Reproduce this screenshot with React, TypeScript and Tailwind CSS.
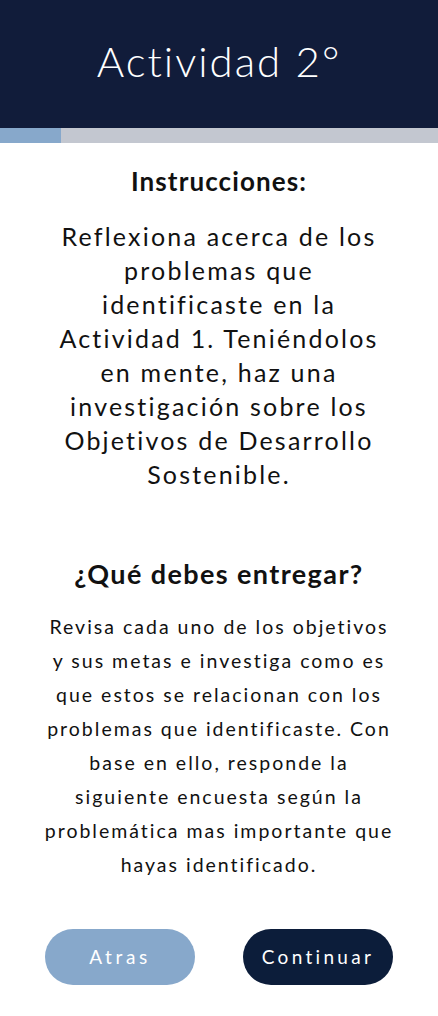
export default function App() {
  return (
    <div className="flex min-h-[1016px] w-full flex-col bg-white font-['Lato','Noto_Sans',sans-serif] text-[#111]">
      <header className="flex h-[128px] items-center justify-center bg-[#111c3a] pb-[6px]">
        <h1 className="text-[42px] font-light tracking-[2px] text-white">Actividad 2°</h1>
      </header>
      <div className="flex h-[15px] bg-[#c3c7d0]">
        <div className="w-[61px] bg-[#87a8cb]" />
      </div>

      <main className="flex flex-col items-center text-center">
        <h2 className="mt-[20px] text-[26px] font-bold leading-[36px] tracking-[1.1px]">Instrucciones:</h2>
        <p className="mt-[20px] text-[25px] leading-[34px] tracking-[2.2px]">
          Reflexiona acerca de los
          <br />
          problemas que
          <br />
          identificaste en la
          <br />
          Actividad 1. Teniéndolos
          <br />
          en mente, haz una
          <br />
          investigación sobre los
          <br />
          Objetivos de Desarrollo
          <br />
          Sostenible.
        </p>

        <h2 className="mt-[66px] text-[27px] font-bold leading-[34px] tracking-[1.4px]">¿Qué debes entregar?</h2>
        <p className="mt-[19px] text-[19.5px] leading-[34px] tracking-[2px]">
          Revisa cada uno de los objetivos
          <br />
          y sus metas e investiga como es
          <br />
          que estos se relacionan con los
          <br />
          problemas que identificaste. Con
          <br />
          base en ello, responde la
          <br />
          siguiente encuesta según la
          <br />
          problemática mas importante que
          <br />
          hayas identificado.
        </p>
      </main>

      <div className="mt-[47px] flex justify-between pl-[45px] pr-[45px]">
        <button className="h-[56px] w-[150px] rounded-full bg-[#87a8cb] text-[19px] tracking-[3.6px] text-white">
          Atras
        </button>
        <button className="h-[56px] w-[150px] rounded-full bg-[#0c1d3a] text-[19px] tracking-[3.3px] text-white">
          Continuar
        </button>
      </div>
    </div>
  );
}
